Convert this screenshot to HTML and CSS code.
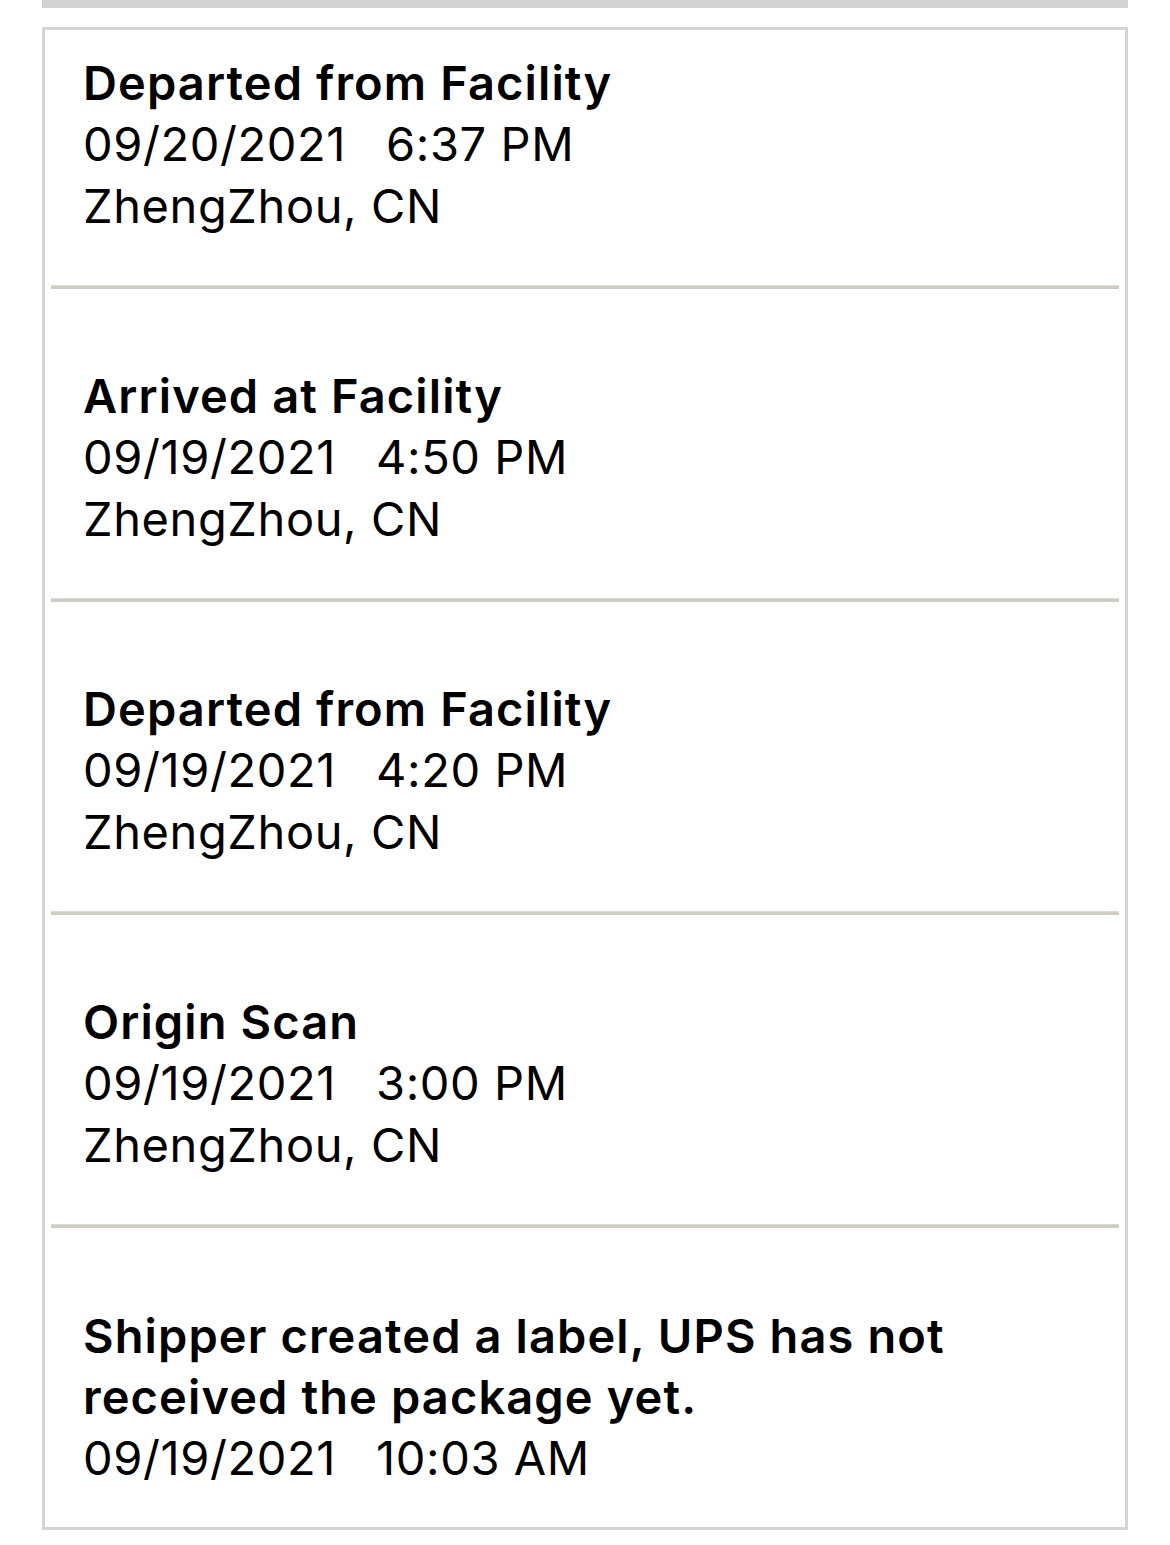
FILE: index.html
```html
<!DOCTYPE html>
<html>
<head>
<meta charset="utf-8">
<link rel="stylesheet" href="styles.css">
</head>
<body>
<div class="page">
  <div class="topbar"></div>
  <div class="card">
    <div class="item first">
      <div class="title">Departed from Facility</div>
      <div class="line"><span class="date">09/20/2021</span><span class="time">6:37 PM</span></div>
      <div class="line">ZhengZhou, CN</div>
    </div>
    <div class="divider"></div>
    <div class="item">
      <div class="title">Arrived at Facility</div>
      <div class="line"><span class="date">09/19/2021</span><span class="time">4:50 PM</span></div>
      <div class="line">ZhengZhou, CN</div>
    </div>
    <div class="divider"></div>
    <div class="item">
      <div class="title">Departed from Facility</div>
      <div class="line"><span class="date">09/19/2021</span><span class="time">4:20 PM</span></div>
      <div class="line">ZhengZhou, CN</div>
    </div>
    <div class="divider"></div>
    <div class="item">
      <div class="title">Origin Scan</div>
      <div class="line"><span class="date">09/19/2021</span><span class="time">3:00 PM</span></div>
      <div class="line">ZhengZhou, CN</div>
    </div>
    <div class="divider"></div>
    <div class="item last">
      <div class="title">Shipper created a label, UPS has not<br>received the package yet.</div>
      <div class="line"><span class="date">09/19/2021</span><span class="time">10:03 AM</span></div>
    </div>
  </div>
</div>
</body>
</html>
```

FILE: styles.css
```css
* { box-sizing: border-box; }
html, body { margin: 0; padding: 0; background: #ffffff; }
body {
  font-family: Inter, "Open Sans", "Liberation Sans", sans-serif;
  color: #000;
}
.page {
  width: 1170px;
  padding: 0 42px 15px 42px;
}
.topbar {
  height: 8px;
  background: #d3d3d3;
  margin-bottom: 19px;
}
.card {
  border: 3px solid #d4d4d4;
  background: #fff;
  display: flex;
  flex-direction: column;
}
.item {
  padding: 76px 38px 48px 38px;
  font-size: 47px;
  line-height: 62px;
}
.item.first { padding-top: 22px; }
.item.last { padding-top: 77px; padding-bottom: 38px; }
.title { font-weight: 600; letter-spacing: 1.1px; line-height: 61px; }
.line { font-weight: 400; letter-spacing: 0.6px; }
.date { margin-right: 40px; }
.divider {
  height: 4px;
  margin: 0 6px;
  background: #cfcbc5;
  border-top: 1px solid #dedad5;
}
```
